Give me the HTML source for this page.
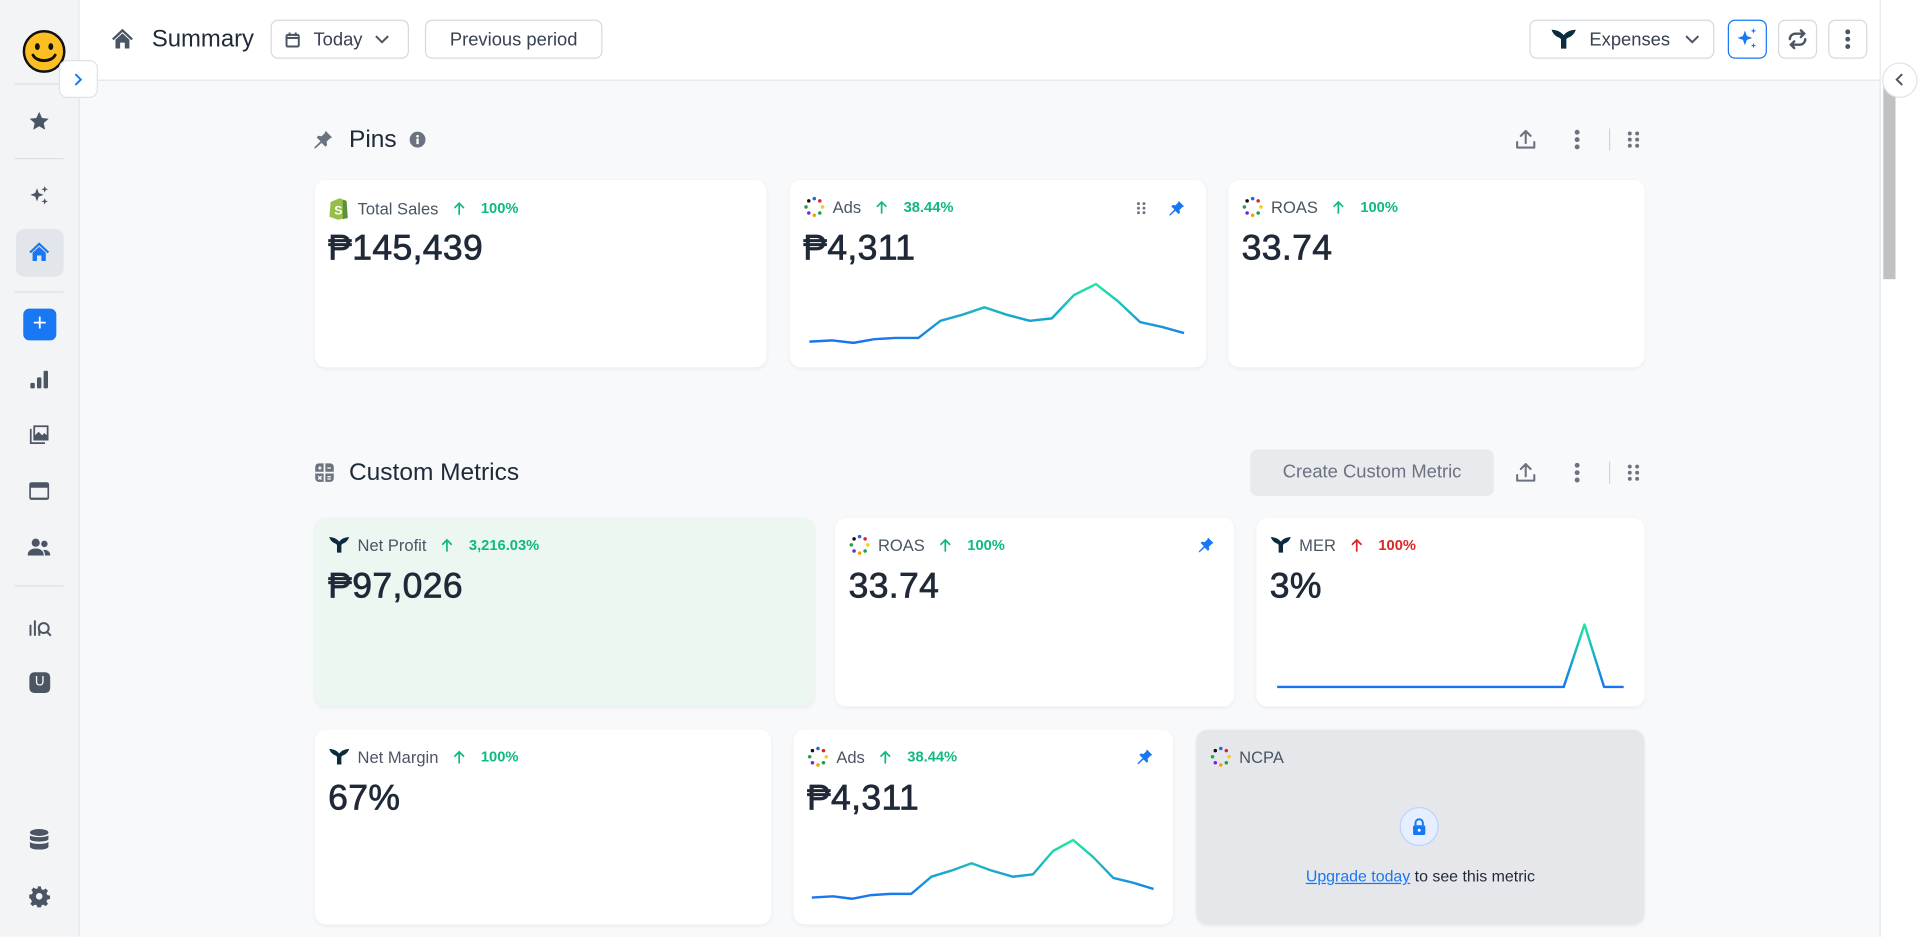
<!DOCTYPE html>
<html><head><meta charset="utf-8"><style>
*{box-sizing:border-box;margin:0;padding:0}
body{width:1920px;height:937px;overflow:hidden;background:#f8f9fb;font-family:"Liberation Sans",sans-serif}
#w{width:1568px;height:765px;transform:scale(1.22449);transform-origin:0 0;position:relative;background:#f8f9fb}
.a{position:absolute}
.sb{left:0;top:0;width:65px;height:765px;background:#f3f4f6;border-right:1px solid #e2e5ea}
.hd{left:65px;top:0;width:1470px;height:66px;background:#fff;border-bottom:1px solid #e2e5ea}
.btn{position:absolute;border:1px solid #d6d9de;border-radius:6px;background:#fff;display:flex;align-items:center;justify-content:center;color:#374151;font-size:15px}
.card{position:absolute;background:#fff;border-radius:9px;box-shadow:0 1px 3px rgba(0,0,0,.06)}
.lbl{position:absolute;left:11px;top:13px;display:flex;align-items:center;font-size:13.5px;color:#4b5563;white-space:nowrap}
.lbl svg{margin-right:6px}
.pc{color:#10b981;font-size:12px;font-weight:bold;margin-left:12px;display:flex;align-items:center}
.pc.r{color:#dc2626}
.val{position:absolute;left:11px;top:40px;font-size:29px;color:#1f2937;-webkit-text-stroke:.6px #1f2937;letter-spacing:.3px}
.div{position:absolute;left:12px;width:40px;height:1px;background:#dde0e5}
.ic{position:absolute;transform:translate(-50%,-50%)}
.ttl{position:absolute;font-size:20px;color:#1f2937}
</style></head><body><div id="w">
<svg width="0" height="0" style="position:absolute"><defs>
<linearGradient id="g" x1="0" y1="1" x2="0" y2="0"><stop offset="0" stop-color="#1a73f0"/><stop offset="1" stop-color="#1de9a0"/></linearGradient>
<symbol id="dots" viewBox="0 0 20 20"><circle cx="5" cy="4.5" r="1.6" fill="#111"/><circle cx="10" cy="2.5" r="1.6" fill="#2563eb"/><circle cx="15" cy="4.5" r="1.6" fill="#dc2626"/><circle cx="17.5" cy="10" r="1.6" fill="#facc15"/><circle cx="15" cy="15.5" r="1.6" fill="#16a34a"/><circle cx="10" cy="17.5" r="1.6" fill="#f59e0b"/><circle cx="5" cy="15.5" r="1.6" fill="#6d28d9"/><circle cx="2.5" cy="10" r="1.6" fill="#22a34a"/></symbol>
<symbol id="tw" viewBox="0 0 20 20"><path d="M1 3c3 0 6 1 8 3l1 1 1-1c2-2 5-3 8-3-1 3-3 5-6 6l-1 1v7H8v-7L7 9C4 8 2 6 1 3z" fill="#0d2b3e"/></symbol>
<symbol id="pin" viewBox="0 0 20 20"><path d="M12 2l6 6-2 1-3 3 .5 3-1.5 1.5-3.5-3.5L3 18l-1 0 0-1 5.5-5.5L4 8l1.5-1.5 3 .5 3-3z" fill="currentColor"/></symbol>
<symbol id="grip" viewBox="0 0 12 16"><g fill="currentColor"><circle cx="3" cy="3" r="1.6"/><circle cx="9" cy="3" r="1.6"/><circle cx="3" cy="8" r="1.6"/><circle cx="9" cy="8" r="1.6"/><circle cx="3" cy="13" r="1.6"/><circle cx="9" cy="13" r="1.6"/></g></symbol>
<symbol id="vd" viewBox="0 0 6 18"><g fill="currentColor"><circle cx="3" cy="3" r="2"/><circle cx="3" cy="9" r="2"/><circle cx="3" cy="15" r="2"/></g></symbol>
<symbol id="up" viewBox="0 0 20 20"><path d="M10 13V3M6 7l4-4 4 4M3 12v4.5h14V12" fill="none" stroke="currentColor" stroke-width="1.7" stroke-linecap="round" stroke-linejoin="round"/></symbol>
<symbol id="arr" viewBox="0 0 10 12"><path d="M5 11V2M1.5 5.5L5 2l3.5 3.5" fill="none" stroke="currentColor" stroke-width="1.4" stroke-linecap="round"/></symbol>
</defs></svg>

<div class="a sb"></div>
<svg class="ic" style="left:36px;top:42px" width="36" height="36" viewBox="0 0 36 36"><circle cx="18" cy="18" r="16.5" fill="#fbbf24" stroke="#111" stroke-width="2"/><ellipse cx="12.5" cy="14" rx="2" ry="2.8" fill="#111"/><ellipse cx="23.5" cy="14" rx="2" ry="2.8" fill="#111"/><path d="M9 21c3 6 15 6 18 0" fill="none" stroke="#111" stroke-width="2.4" stroke-linecap="round"/></svg>
<div class="div" style="top:68px"></div>
<svg class="ic" style="left:32px;top:99px;color:#4b5563" width="18" height="18" viewBox="0 0 20 20"><path d="M10 1.5l2.6 5.6 6 .6-4.5 4 1.3 6L10 14.6l-5.4 3.1 1.3-6-4.5-4 6-.6z" fill="currentColor"/></svg>
<div class="div" style="top:129px"></div>
<svg class="ic" style="left:32px;top:160px" width="18" height="18" viewBox="0 0 20 20" fill="#4b5563"><path d="M8 3l1.6 4.4L14 9l-4.4 1.6L8 15l-1.6-4.4L2 9l4.4-1.6z"/><path d="M15 1l.8 2.2L18 4l-2.2.8L15 7l-.8-2.2L12 4l2.2-.8zM15 12l.8 2.2 2.2.8-2.2.8L15 18l-.8-2.2-2.2-.8 2.2-.8z"/></svg>
<div class="a" style="left:13px;top:187px;width:39px;height:39px;border-radius:7px;background:#e2e5ea"></div>
<svg class="ic" style="left:32px;top:206px" width="18" height="18" viewBox="0 0 20 20"><path d="M10 1L1 9.5l1.4 1.4L10 3.8l7.6 7.1L19 9.5z" fill="#1877f2"/><path d="M4 10.5L10 5l6 5.5V18h-4v-5H8v5H4z" fill="#1877f2"/></svg>
<div class="div" style="top:238px"></div>
<div class="a" style="left:19px;top:252px;width:27px;height:26px;border-radius:5px;background:#1877f2;color:#fff;font-size:20px;line-height:25px;text-align:center">+</div>
<svg class="ic" style="left:32px;top:310px" width="18" height="18" viewBox="0 0 20 20" fill="#4b5563"><rect x="2" y="13" width="4" height="5" rx="1"/><rect x="8" y="8" width="4" height="10" rx="1"/><rect x="14" y="2" width="4" height="16" rx="1"/></svg>
<svg class="ic" style="left:32px;top:355px" width="19" height="19" viewBox="0 0 20 20" fill="#4b5563"><path d="M5 2h13v13H5z M6.5 3.5v7l3-3 3 3 2-2 2 2V3.5z"/><path d="M2 5h1.5v11.5H15V18H2z"/></svg>
<svg class="ic" style="left:32px;top:401px" width="18" height="18" viewBox="0 0 20 20" fill="#4b5563"><path d="M3 2h14a2 2 0 012 2v12a2 2 0 01-2 2H3a2 2 0 01-2-2V4a2 2 0 012-2zm-.5 5v9h15V7z"/></svg>
<svg class="ic" style="left:32px;top:447px" width="19" height="17" viewBox="0 0 20 18" fill="#4b5563"><circle cx="7" cy="5" r="3.5"/><circle cx="14.5" cy="6" r="2.8"/><path d="M0 16c0-4 3-6 7-6s7 2 7 6zM15 16c0-2-.5-3.5-1.6-4.7 3.5-.5 6.2 1.3 6.2 4.7z"/></svg>
<div class="div" style="top:478px"></div>
<svg class="ic" style="left:33px;top:512px" width="20" height="18" viewBox="0 0 22 20" fill="none" stroke="#4b5563" stroke-width="1.8"><path d="M2 18V8M6 18V4M10 18v-6" /><circle cx="14" cy="11" r="4.5"/><path d="M17 14.5l3.5 3.5"/></svg>
<div class="a" style="left:24px;top:549px;width:17px;height:17px;border-radius:4px;background:#4b5563;color:#fff;font-size:11px;line-height:17px;text-align:center">U</div>
<svg class="ic" style="left:32px;top:686px" width="17" height="19" viewBox="0 0 18 20" fill="#4b5563"><ellipse cx="9" cy="3.5" rx="8" ry="3"/><path d="M1 6c1.5 2 14.5 2 16 0v3.5c-1.5 2.5-14.5 2.5-16 0zM1 11.5c1.5 2.5 14.5 2.5 16 0V16c-1.5 3-14.5 3-16 0z"/></svg>
<svg class="ic" style="left:32px;top:732px" width="18" height="18" viewBox="0 0 20 20"><path d="M8.5 1h3l.5 2.5 1.8.8 2.1-1.4 2.1 2.1-1.4 2.1.8 1.8 2.5.5v3l-2.5.5-.8 1.8 1.4 2.1-2.1 2.1-2.1-1.4-1.8.8-.5 2.5h-3l-.5-2.5-1.8-.8-2.1 1.4-2.1-2.1 1.4-2.1-.8-1.8L1 11.5v-3l2.5-.5.8-1.8-1.4-2.1 2.1-2.1 2.1 1.4 1.8-.8z" fill="#4b5563"/><circle cx="10" cy="10" r="3" fill="#f3f4f6"/></svg>

<div class="a hd"></div>
<div class="a" style="left:48px;top:49px;width:32px;height:31px;border:1px solid #dfe3e8;border-radius:7px;background:#fff"></div>
<svg class="ic" style="left:64px;top:65px" width="10" height="12" viewBox="0 0 10 12"><path d="M3 2l4 4-4 4" fill="none" stroke="#1877f2" stroke-width="1.6" stroke-linecap="round"/></svg>
<svg class="ic" style="left:100px;top:32px" width="19" height="19" viewBox="0 0 20 20" fill="#4b5563"><path d="M10 1L1 9.5l1.4 1.4L10 3.8l7.6 7.1L19 9.5z"/><path d="M4 10.5L10 5l6 5.5V18h-4v-5H8v5H4z"/></svg>
<div class="ttl" style="left:124px;top:21px;font-size:19.5px">Summary</div>
<div class="btn" style="left:221px;top:16px;width:113px;height:32px;justify-content:flex-start;padding-left:11px"><svg width="12" height="13" viewBox="0 0 12 13"><rect x="1" y="2.5" width="10" height="9.5" rx="1" fill="none" stroke="#4b5563" stroke-width="1.6"/><path d="M1 5h10M3.5 0.5v3M8.5 0.5v3" stroke="#4b5563" stroke-width="1.6"/></svg><span style="margin-left:11px">Today</span><svg style="margin-left:10px" width="12" height="8" viewBox="0 0 12 8"><path d="M1 1.5l5 5 5-5" fill="none" stroke="#4b5563" stroke-width="1.6"/></svg></div>
<div class="btn" style="left:347px;top:16px;width:145px;height:32px">Previous period</div>
<div class="btn" style="left:1249px;top:16px;width:151px;height:32px;justify-content:flex-start;padding-left:16px"><svg width="22" height="22"><use href="#tw"/></svg><span style="margin-left:10px">Expenses</span><svg style="margin-left:12px" width="12" height="8" viewBox="0 0 12 8"><path d="M1 1.5l5 5 5-5" fill="none" stroke="#4b5563" stroke-width="1.6"/></svg></div>
<div class="btn" style="left:1411px;top:16px;width:32px;height:32px;border-color:#1877f2"><svg width="20" height="20" viewBox="0 0 20 20" fill="#1877f2"><path d="M8 3l1.6 4.4L14 9l-4.4 1.6L8 15l-1.6-4.4L2 9l4.4-1.6z"/><path d="M15 1l.6 1.6 1.6.6-1.6.6L15 5.4l-.6-1.6-1.6-.6 1.6-.6zM15 13l.6 1.6 1.6.6-1.6.6-.6 1.6-.6-1.6-1.6-.6 1.6-.6z"/></svg></div>
<div class="btn" style="left:1452px;top:16px;width:32px;height:32px"><svg width="18" height="18" viewBox="0 0 20 20" fill="none" stroke="#4b5563" stroke-width="2.2" stroke-linecap="round"><path d="M3 10a5 5 0 015-5h8M13 2l3 3-3 3M17 10a5 5 0 01-5 5H4M7 18l-3-3 3-3"/></svg></div>
<div class="btn" style="left:1493px;top:16px;width:32px;height:32px;color:#4b5563"><svg width="6" height="18"><use href="#vd"/></svg></div>

<div class="a" style="left:1535px;top:0;width:33px;height:765px;background:#fff;border-left:1px solid #e2e5ea"></div>
<div class="a" style="left:1538px;top:68px;width:10px;height:160px;background:#c1c1c1"></div>
<div class="a" style="left:1537px;top:51px;width:29px;height:29px;border-radius:50%;border:1px solid #dfe3e8;background:#fff"></div>
<svg class="ic" style="left:1551px;top:65px" width="10" height="12" viewBox="0 0 10 12"><path d="M7 2L3 6l4 4" fill="none" stroke="#4b5563" stroke-width="1.6" stroke-linecap="round"/></svg>

<!-- Pins -->
<svg class="ic" style="left:264px;top:114px;color:#6b7280" width="18" height="18"><use href="#pin"/></svg>
<div class="ttl" style="left:285px;top:103px">Pins</div>
<svg class="ic" style="left:341px;top:114px" width="13" height="13" viewBox="0 0 14 14"><circle cx="7" cy="7" r="7" fill="#6b7280"/><rect x="6" y="6" width="2" height="5" fill="#fff"/><circle cx="7" cy="4" r="1.2" fill="#fff"/></svg>
<svg class="ic" style="left:1246px;top:114px;color:#6b7280" width="20" height="20"><use href="#up"/></svg>
<svg class="ic" style="left:1288px;top:114px;color:#6b7280" width="6" height="18"><use href="#vd"/></svg>
<div class="a" style="left:1314px;top:105px;width:1px;height:18px;background:#d1d5db"></div>
<svg class="ic" style="left:1334px;top:114px;color:#6b7280" width="12" height="16"><use href="#grip"/></svg>

<div class="card" style="left:257px;top:147px;width:369px;height:153px">
<div class="lbl"><svg width="18" height="20" viewBox="0 0 18 20"><path d="M2 5l7-3 1 0 2 1 3 1 1 14-8 1.5L1 17z" fill="#95bf47"/><path d="M12 3l3 1 1 14-4 1z" fill="#5e8e3e"/><text x="5" y="15" font-size="10" font-weight="bold" fill="#fff" font-family="Liberation Sans">S</text></svg>Total Sales<span class="pc"><svg width="10" height="12"><use href="#arr"/></svg>&nbsp;&nbsp;100%</span></div>
<div class="val">₱145,439</div></div>

<div class="card" style="left:645px;top:147px;width:340px;height:153px">
<div class="lbl"><svg width="18" height="18"><use href="#dots"/></svg>Ads<span class="pc"><svg width="10" height="12"><use href="#arr"/></svg>&nbsp;&nbsp;38.44%</span></div>
<svg class="ic" style="left:287px;top:23px;color:#6b7280" width="9" height="12"><use href="#grip"/></svg>
<svg class="ic" style="left:316px;top:23px;color:#1877f2" width="15" height="15"><use href="#pin"/></svg>
<div class="val">₱4,311</div>
<svg class="a" style="left:0;top:0" width="340" height="153"><polyline fill="none" stroke="url(#g)" stroke-width="2" stroke-linejoin="round" points="16,132 35,131 52,133 69,130 86,129 105,129 123,115 141,110 159,104 177,110 196,115 214,113 232,94 250,85 268,99 286,116 304,120 322,125"/></svg></div>

<div class="card" style="left:1003px;top:147px;width:340px;height:153px">
<div class="lbl"><svg width="18" height="18"><use href="#dots"/></svg>ROAS<span class="pc"><svg width="10" height="12"><use href="#arr"/></svg>&nbsp;&nbsp;100%</span></div>
<div class="val">33.74</div></div>

<!-- Custom metrics -->
<svg class="ic" style="left:265px;top:386px" width="17" height="17" viewBox="0 0 18 18"><rect x="1" y="1" width="16" height="16" rx="3" fill="#6b7280"/><path d="M9 1v16M1 9h16" stroke="#f8f9fb" stroke-width="1.5"/><path d="M3.5 5h3M5 3.5v3M11.5 5h3M3.5 12l3 3M6.5 12l-3 3M11.5 12.5h3M11.5 14.5h3" stroke="#fff" stroke-width="1.1"/></svg>
<div class="ttl" style="left:285px;top:375px">Custom Metrics</div>
<div class="a" style="left:1021px;top:367px;width:199px;height:38px;border-radius:6px;background:#e8eaed;color:#6b7280;font-size:15px;line-height:38px;text-align:center">Create Custom Metric</div>
<svg class="ic" style="left:1246px;top:386px;color:#6b7280" width="20" height="20"><use href="#up"/></svg>
<svg class="ic" style="left:1288px;top:386px;color:#6b7280" width="6" height="18"><use href="#vd"/></svg>
<div class="a" style="left:1314px;top:377px;width:1px;height:18px;background:#d1d5db"></div>
<svg class="ic" style="left:1334px;top:386px;color:#6b7280" width="12" height="16"><use href="#grip"/></svg>

<div class="card" style="left:257px;top:423px;width:408px;height:154px;background:#ecf7f2">
<div class="lbl"><svg width="18" height="18"><use href="#tw"/></svg>Net Profit<span class="pc"><svg width="10" height="12"><use href="#arr"/></svg>&nbsp;&nbsp;3,216.03%</span></div>
<div class="val">₱97,026</div></div>

<div class="card" style="left:682px;top:423px;width:326px;height:154px">
<div class="lbl"><svg width="18" height="18"><use href="#dots"/></svg>ROAS<span class="pc"><svg width="10" height="12"><use href="#arr"/></svg>&nbsp;&nbsp;100%</span></div>
<svg class="ic" style="left:303px;top:22px;color:#1877f2" width="15" height="15"><use href="#pin"/></svg>
<div class="val">33.74</div></div>

<div class="card" style="left:1026px;top:423px;width:317px;height:154px">
<div class="lbl"><svg width="18" height="18"><use href="#tw"/></svg>MER<span class="pc r"><svg width="10" height="12"><use href="#arr"/></svg>&nbsp;&nbsp;100%</span></div>
<div class="val">3%</div>
<svg class="a" style="left:0;top:0" width="317" height="154"><polyline fill="none" stroke="url(#g)" stroke-width="2" stroke-linejoin="round" points="17,138 251,138 268,87 284,138 300,138"/></svg></div>

<div class="card" style="left:257px;top:596px;width:373px;height:159px">
<div class="lbl"><svg width="18" height="18"><use href="#tw"/></svg>Net Margin<span class="pc"><svg width="10" height="12"><use href="#arr"/></svg>&nbsp;&nbsp;100%</span></div>
<div class="val">67%</div></div>

<div class="card" style="left:648px;top:596px;width:310px;height:159px">
<div class="lbl"><svg width="18" height="18"><use href="#dots"/></svg>Ads<span class="pc"><svg width="10" height="12"><use href="#arr"/></svg>&nbsp;&nbsp;38.44%</span></div>
<svg class="ic" style="left:287px;top:22px;color:#1877f2" width="15" height="15"><use href="#pin"/></svg>
<div class="val">₱4,311</div>
<svg class="a" style="left:0;top:0" width="310" height="159"><g transform="translate(15,0) scale(0.912,1)"><polyline fill="none" stroke="url(#g)" stroke-width="2" stroke-linejoin="round" points="0,137 19,136 36,138 53,135 70,134 89,134 107,120 125,115 143,109 161,115 180,120 198,118 216,99 234,90 252,104 270,121 288,125 306,130"/></g></svg></div>

<div class="card" style="left:977px;top:596px;width:366px;height:159px;background:#e5e7eb">
<div class="lbl"><svg width="18" height="18"><use href="#dots"/></svg>NCPA</div>
<div class="a" style="left:166px;top:63px;width:32px;height:32px;border-radius:50%;background:#e6efff;border:1px solid #bcd4f8"></div>
<svg class="ic" style="left:182px;top:79px" width="12" height="14" viewBox="0 0 12 14"><path d="M3 6V4a3 3 0 016 0v2" fill="none" stroke="#1877f2" stroke-width="1.6"/><rect x="1" y="6" width="10" height="8" rx="1.5" fill="#1877f2"/><circle cx="6" cy="10" r="1.2" fill="#fff"/></svg>
<div class="a" style="left:0;width:366px;top:112px;text-align:center;font-size:13px;color:#1f2937"><span style="color:#1877f2;text-decoration:underline">Upgrade today</span> to see this metric</div></div>
</div></body></html>
